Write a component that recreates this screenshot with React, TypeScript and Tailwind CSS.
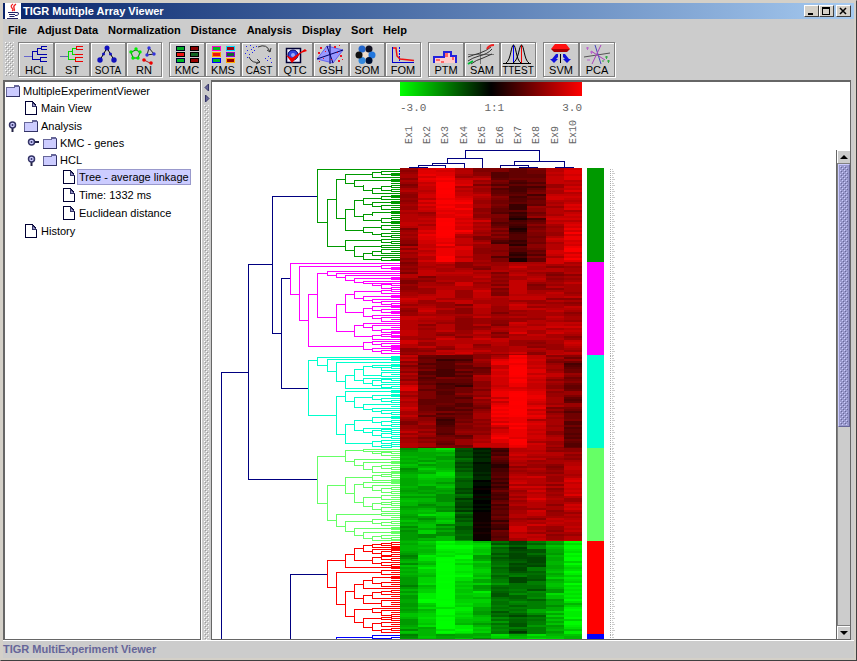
import type { ReactNode } from 'react';
import clsx from 'clsx';

type Bracket = [level: number, y1: number, y2: number, child1: number, child2: number];

interface TreeNode {
  label: string;
  depth: number;
  kind: 'folder' | 'leaf';
  handle?: 'open' | 'closed';
  selected?: boolean;
}

interface Tool {
  label: string;
  small?: boolean;
  icon: ReactNode;
}

const MENUS = ['File', 'Adjust Data', 'Normalization', 'Distance', 'Analysis', 'Display', 'Sort', 'Help'];

const TREE: TreeNode[] = [
  { label: 'MultipleExperimentViewer', depth: 0, kind: 'folder' },
  { label: 'Main View', depth: 1, kind: 'leaf' },
  { label: 'Analysis', depth: 1, kind: 'folder', handle: 'open' },
  { label: 'KMC - genes', depth: 2, kind: 'folder', handle: 'closed' },
  { label: 'HCL', depth: 2, kind: 'folder', handle: 'open' },
  { label: 'Tree - average linkage', depth: 3, kind: 'leaf', selected: true },
  { label: 'Time: 1332 ms', depth: 3, kind: 'leaf' },
  { label: 'Euclidean distance', depth: 3, kind: 'leaf' },
  { label: 'History', depth: 1, kind: 'leaf' },
];

const INDENT = ['pl-0', 'pl-0', 'pl-[19px]', 'pl-[38px]'];

// x position of every merge level in the gene tree, the last one is the leaf edge
const LEVELS = [9, 36, 60, 69, 78, 87, 96, 105, 115, 124, 133, 142, 151, 160, 169, 179, 188];

const ROWS = 47;
const CLUSTER_H = 93;
const FIRST_H = 94;
const VIEW_H = 560;

const NAVY: Bracket[] = [
  [0, 204, 560, 1, 0],
  [1, 96, 311, 2, 7],
  [2, 28, 165, 7, 3],
  [3, 110, 220, 4, 6],
  [4, 406, 560, 8, 4],
];

const GREEN: Bracket[] = [
  [7, 1, 54, 16, 8], [8, 31, 78, 9, 10], [9, 11, 50, 10, 10], [10, 6, 15, 13, 11],
  [13, 4, 9, 14, 16], [14, 3, 6, 15, 16], [11, 12, 18, 16, 12], [12, 16, 22, 12, 13],
  [13, 20, 25, 14, 16], [14, 18, 22, 15, 15], [10, 41, 62, 11, 12], [11, 32, 48, 12, 12],
  [12, 30, 36, 14, 13], [14, 28, 31, 16, 16], [13, 34, 38, 16, 14], [14, 37, 41, 15, 15],
  [12, 46, 52, 13, 14], [13, 44, 47, 16, 13], [14, 50, 54, 15, 16], [12, 59, 64, 14, 13],
  [14, 57, 61, 15, 15], [13, 64, 66, 13, 14], [14, 65, 68, 15, 15], [10, 72, 82, 14, 11],
  [14, 71, 74, 15, 15], [11, 78, 88, 14, 12], [14, 77, 79, 16, 16], [12, 85, 91, 13, 14],
  [13, 83, 87, 14, 16], [14, 81, 85, 15, 15], [14, 89, 92, 15, 16],
];

const MAGENTA: Bracket[] = [
  [4, 95, 126, 16, 5], [5, 98, 152, 14, 6], [14, 97, 100, 15, 16], [6, 126, 178, 7, 12],
  [7, 105, 149, 8, 9], [8, 103, 107, 16, 9], [9, 105, 109, 16, 10], [10, 107, 112, 16, 11],
  [11, 110, 114, 16, 12], [12, 113, 115, 16, 13], [13, 115, 117, 16, 14], [14, 116, 120, 15, 15],
  [9, 136, 163, 10, 11], [10, 126, 144, 11, 12], [11, 123, 130, 14, 12], [14, 122, 125, 15, 15],
  [12, 128, 132, 16, 13], [13, 131, 134, 16, 14], [14, 133, 136, 15, 15], [12, 140, 148, 13, 13],
  [13, 138, 142, 16, 14], [14, 141, 144, 15, 16], [13, 147, 150, 16, 14], [14, 149, 153, 15, 15],
  [11, 157, 168, 12, 13], [12, 155, 159, 16, 13], [13, 157, 162, 16, 14], [14, 161, 164, 15, 16],
  [13, 167, 171, 14, 16], [14, 166, 168, 15, 16], [12, 174, 181, 13, 13], [13, 173, 176, 16, 14],
  [14, 175, 178, 15, 16], [13, 180, 183, 16, 14], [14, 182, 185, 15, 15],
];

const CYAN: Bracket[] = [
  [6, 192, 247, 7, 9], [7, 189, 197, 16, 8], [8, 191, 203, 16, 9], [9, 194, 213, 16, 10],
  [10, 207, 220, 11, 16], [11, 201, 212, 12, 12], [12, 198, 207, 13, 14], [13, 197, 199, 16, 14],
  [14, 199, 202, 15, 15], [14, 204, 208, 15, 15], [12, 210, 215, 16, 13], [13, 212, 217, 14, 14],
  [14, 211, 214, 15, 15], [14, 216, 219, 15, 15], [9, 228, 266, 10, 10], [10, 223, 233, 16, 11],
  [11, 229, 239, 13, 12], [13, 227, 231, 16, 14], [14, 230, 233, 15, 15], [12, 236, 241, 16, 13],
  [13, 240, 243, 16, 14], [14, 242, 245, 15, 15], [10, 256, 275, 11, 13], [11, 252, 262, 13, 12],
  [13, 249, 254, 16, 14], [14, 253, 257, 15, 15], [12, 260, 264, 16, 13], [13, 262, 267, 14, 14],
  [14, 261, 263, 15, 15], [14, 265, 269, 15, 15], [13, 273, 278, 14, 14], [14, 272, 275, 15, 15],
  [14, 277, 279, 15, 15],
];

const LIME: Bracket[] = [
  [7, 288, 335, 10, 8], [10, 282, 293, 12, 11], [12, 281, 283, 16, 13], [13, 283, 285, 16, 14],
  [14, 284, 287, 15, 15], [11, 291, 297, 16, 12], [12, 294, 301, 16, 13], [13, 298, 304, 14, 16],
  [14, 297, 300, 15, 15], [8, 317, 352, 10, 9], [10, 309, 325, 13, 11], [13, 307, 312, 14, 16],
  [14, 306, 308, 15, 15], [11, 316, 334, 12, 12], [12, 314, 319, 16, 13], [13, 317, 322, 16, 14],
  [14, 320, 324, 15, 15], [12, 329, 338, 14, 13], [14, 327, 331, 15, 15], [13, 335, 341, 14, 14],
  [14, 334, 336, 15, 15], [14, 339, 343, 15, 15], [9, 346, 358, 14, 10], [14, 345, 347, 15, 15],
  [10, 353, 363, 13, 11], [13, 351, 355, 16, 14], [14, 354, 357, 15, 15], [11, 360, 367, 16, 12],
  [12, 364, 370, 16, 13], [13, 368, 372, 14, 16], [14, 367, 370, 15, 15],
];

const RED: Bracket[] = [
  [8, 392, 419, 10, 9], [10, 386, 399, 11, 16], [11, 380, 392, 12, 13], [12, 377, 383, 13, 13],
  [13, 376, 379, 14, 16], [14, 375, 377, 15, 15], [13, 381, 385, 16, 14], [14, 383, 387, 15, 15],
  [13, 389, 395, 14, 14], [14, 388, 391, 15, 15], [14, 394, 397, 15, 15], [9, 404, 436, 14, 10],
  [14, 402, 406, 15, 15], [10, 423, 448, 11, 11], [11, 416, 430, 12, 12], [12, 412, 420, 13, 16],
  [13, 409, 415, 16, 14], [14, 414, 418, 15, 15], [12, 427, 435, 13, 14], [13, 424, 430, 14, 16],
  [14, 423, 426, 15, 15], [14, 432, 438, 15, 15], [11, 441, 454, 13, 12], [13, 440, 444, 16, 14],
  [14, 442, 447, 15, 15], [12, 450, 459, 14, 13], [14, 449, 451, 15, 15], [13, 455, 462, 14, 14],
  [14, 454, 458, 15, 15], [14, 461, 464, 15, 15],
];

const BLUE: Bracket[] = [
  [9, 469, 520, 13, 9], [13, 467, 470, 16, 14], [14, 470, 474, 15, 15],
];

// expression levels per sample, from -255 (green) to 255 (red), in bands from top to bottom
const CLUSTERS = [
  {
    name: 'green', color: '#009900', brackets: GREEN,
    bands: [
      [150, 200, 245, 190, 150, 105, 75, 105, 185, 190],
      [160, 200, 255, 225, 170, 120, 55, 115, 175, 210],
      [155, 210, 250, 205, 150, 105, 60, 115, 180, 225],
    ],
  },
  {
    name: 'magenta', color: '#ff00ff', brackets: MAGENTA,
    bands: [
      [160, 165, 175, 170, 170, 145, 175, 165, 170, 165],
      [170, 170, 165, 160, 175, 160, 175, 160, 170, 165],
      [170, 175, 180, 175, 165, 155, 180, 160, 165, 180],
    ],
  },
  {
    name: 'cyan', color: '#00ffcc', brackets: CYAN,
    bands: [
      [170, 115, 75, 85, 145, 205, 255, 205, 160, 110],
      [185, 125, 85, 110, 155, 235, 255, 225, 155, 120],
      [155, 150, 90, 125, 165, 220, 245, 205, 160, 110],
    ],
  },
  {
    name: 'lime', color: '#66ff66', brackets: LIME,
    bands: [
      [-165, -175, -190, -80, -30, 75, 180, 180, 155, 175],
      [-170, -175, -165, -75, -5, 95, 180, 185, 165, 195],
      [-170, -175, -170, -95, 15, 85, 185, 175, 185, 180],
    ],
  },
  {
    name: 'red', color: '#ff0000', brackets: RED,
    bands: [
      [-160, -200, -250, -230, -185, -110, -70, -105, -190, -230],
      [-165, -225, -255, -215, -195, -120, -100, -120, -190, -220],
      [-175, -210, -255, -215, -175, -115, -90, -130, -180, -240],
    ],
  },
  {
    name: 'blue', color: '#0000ff', brackets: BLUE,
    bands: [
      [-150, -190, -160, -195, -150, -200, -200, -195, -190, -180],
      [-150, -190, -160, -195, -150, -200, -200, -195, -190, -180],
      [-150, -190, -160, -195, -150, -200, -200, -195, -190, -180],
    ],
  },
];

const clusterTop = (c: number) => (c === 0 ? 0 : FIRST_H + (c - 1) * CLUSTER_H);
const clusterHeight = (c: number) => (c === 0 ? FIRST_H : CLUSTER_H);
const rowTop = (c: number, r: number) => clusterTop(c) + Math.min(r * 2, clusterHeight(c));

const noise = (a: number, b: number, c: number) => {
  const v = Math.sin(a * 127.1 + b * 311.7 + c * 74.7) * 43758.5453;
  return v - Math.floor(v);
};

function cellColor(c: number, r: number, col: number) {
  const base = CLUSTERS[c].bands[Math.min(2, Math.floor((r * 3) / ROWS))][col];
  const run = noise(c + 1, Math.floor((r + col * 2) / 3), col + 1) - 0.5;
  const own = noise(c + 7, r, col + 3) - 0.5;
  const spread = Math.abs(base) < 40 ? 20 : 46;
  const value = Math.round((base + (run + own) * spread) / 14) * 14;
  const level = Math.min(255, Math.abs(value));
  return value < 0 ? `rgb(0,${level},0)` : `rgb(${level},0,0)`;
}

function bracketPath([level, y1, y2, c1, c2]: Bracket) {
  const x = LEVELS[level] + 0.5;
  return `M${LEVELS[c1] + 0.5} ${y1 + 0.5}H${x}V${y2 + 0.5}H${LEVELS[c2] + 0.5}`;
}

function Bumps({ id, light, dark, className }: { id: string; light: string; dark: string; className?: string }) {
  return (
    <svg className={className} shapeRendering="crispEdges" aria-hidden="true">
      <defs>
        <pattern id={id} width="4" height="4" patternUnits="userSpaceOnUse">
          <rect width="1" height="1" fill={light} />
          <rect x="1" y="1" width="1" height="1" fill={dark} />
          <rect x="2" y="2" width="1" height="1" fill={light} />
          <rect x="3" y="3" width="1" height="1" fill={dark} />
        </pattern>
      </defs>
      <rect width="100%" height="100%" fill={`url(#${id})`} />
    </svg>
  );
}

function Swatches({ cells }: { cells: [string, string][] }) {
  return (
    <g shapeRendering="crispEdges">
      {cells.map(([fill, stroke], i) => (
        <g key={i}>
          <rect x={i % 2 ? 20 : 6} y={3 + Math.floor(i / 2) * 6} width="9" height="5" fill={stroke} />
          <rect x={i % 2 ? 21 : 7} y={4 + Math.floor(i / 2) * 6} width="7" height="3" fill={fill} />
        </g>
      ))}
    </g>
  );
}

const TOOL_GROUPS: Tool[][] = [
  [
    {
      label: 'HCL',
      icon: (
        <g fill="none" stroke="#0000aa" shapeRendering="crispEdges">
          <path d="M5 13.5H13" stroke="#6666cc" />
          <path d="M18 8.5H13.5V16.5H21M22 5.5H18.5V11.5H28M28 3.5H22.5V6.5H28M28 14.5H21.5V18.5H28" />
        </g>
      ),
    },
    {
      label: 'ST',
      icon: (
        <g fill="none" shapeRendering="crispEdges">
          <path d="M5 13.5H13" stroke="#6666aa" />
          <path d="M18 8.5H13.5V16.5H21M22 5.5H17.5V11.5H21" stroke="#00dd00" />
          <path d="M28 3.5H21.5V6.5H28M20 11.5H28M28 14.5H20.5V18.5H28" stroke="#ee0000" />
        </g>
      ),
    },
    {
      label: 'SOTA',
      small: true,
      icon: (
        <g>
          <path d="M16 5L9 17M16 5L23 17" stroke="#000" fill="none" />
          <g fill="#1111bb">
            <circle cx="16" cy="5" r="2.5" />
            <circle cx="12.5" cy="11" r="1.5" />
            <circle cx="19.5" cy="11" r="1.5" />
            <circle cx="9" cy="17" r="2.7" />
            <circle cx="23" cy="17" r="2.7" />
          </g>
        </g>
      ),
    },
    {
      label: 'RN',
      icon: (
        <g>
          <path d="M4 9L9 7L13 9L11 15L6 15Z" fill="none" stroke="#006600" />
          <g fill="#00ee00">
            <circle cx="4" cy="9" r="1.7" />
            <circle cx="9" cy="6" r="1.7" />
            <circle cx="13" cy="9" r="1.7" />
            <circle cx="11" cy="15" r="1.7" />
            <circle cx="6" cy="15" r="1.7" />
          </g>
          <path d="M22 5L20 12L27 11Z" fill="none" stroke="#222" />
          <g fill="#3333dd">
            <circle cx="22" cy="5" r="1.7" />
            <circle cx="20" cy="12" r="1.7" />
            <circle cx="27" cy="11" r="1.7" />
          </g>
          <path d="M17 17L25 21" stroke="#aa2222" />
          <circle cx="17" cy="17" r="1.8" fill="#ee0000" />
          <circle cx="24" cy="20" r="1.8" fill="#ee0000" />
        </g>
      ),
    },
  ],
  [
    {
      label: 'KMC',
      icon: (
        <Swatches
          cells={[
            ['#00aa22', '#000022'], ['#880000', '#000000'], ['#ee1111', '#000000'],
            ['#116622', '#000000'], ['#00bb22', '#000044'], ['#990000', '#000000'],
          ]}
        />
      ),
    },
    {
      label: 'KMS',
      icon: (
        <Swatches
          cells={[
            ['#00bb22', '#ff00cc'], ['#990011', '#00ddff'], ['#ee1111', '#ff9900'],
            ['#116633', '#9900cc'], ['#00bb22', '#0000ff'], ['#990000', '#ffaa00'],
          ]}
        />
      ),
    },
    {
      label: 'CAST',
      small: true,
      icon: (
        <g>
          <path
            d="M4 3h1v1h-1zM8 2h1v1h-1zM11 4h1v1h-1zM5 7h1v1h-1zM9 6h1v1h-1zM3 10h1v1h-1zM7 11h1v1h-1zM10 9h1v1h-1zM14 3h1v1h-1zM5 14h1v1h-1zM12 7h1v1h-1zM26 13h1v1h-1zM28 15h1v1h-1zM25 17h1v1h-1zM29 19h1v1h-1zM23 15h1v1h-1z"
            fill="#2222ee"
          />
          <path d="M16 4Q25 0 28 9M28 9l-3-2M28 9l1-4M7 14Q10 21 18 19M18 19l-3-3M18 19l-4 2" fill="none" stroke="#333" />
        </g>
      ),
    },
    {
      label: 'QTC',
      icon: (
        <g>
          <rect x="8.5" y="5.5" width="14" height="14" fill="#eeeeff" stroke="#000033" strokeWidth="1.5" />
          <circle cx="15" cy="12" r="5" fill="#3344dd" stroke="#000066" />
          <circle cx="15" cy="12" r="2" fill="#99aaff" />
          <path d="M8 12L14 15L27 6L29 8L23 10L14 20Z" fill="#ee0000" />
        </g>
      ),
    },
    {
      label: 'GSH',
      icon: (
        <g>
          <path d="M3 16L13 3L29 7L19 20Z" fill="#9999ff" stroke="#6666ee" />
          <path d="M3 16L29 7M16 1V21M13 3L19 20" fill="none" stroke="#000066" />
          <path
            d="M6 4h2v2h-2zM11 8h1v1h-1zM20 3h2v2h-2zM25 2h1v1h-1zM23 9h1v1h-1zM4 9h2v2h-2zM9 15h1v1h-1zM17 16h1v1h-1zM26 12h2v2h-2zM24 17h2v2h-2zM28 16h1v1h-1zM5 18h1v1h-1z"
            fill="#ee1122"
          />
        </g>
      ),
    },
    {
      label: 'SOM',
      icon: (
        <g>
          <circle cx="15.5" cy="12" r="3" fill="#eeddcc" />
          <circle cx="12" cy="6" r="3.5" fill="#2266cc" />
          <circle cx="19" cy="6" r="3.5" fill="#111122" />
          <circle cx="22" cy="12" r="3.5" fill="#2277dd" />
          <circle cx="19" cy="17.5" r="3.5" fill="#001133" />
          <circle cx="12" cy="17.5" r="3.5" fill="#3388dd" />
          <circle cx="9" cy="12" r="3.5" fill="#111111" />
        </g>
      ),
    },
    {
      label: 'FOM',
      icon: (
        <g fill="none">
          <path d="M6.5 4V19.5H28" stroke="#0000cc" shapeRendering="crispEdges" />
          <path d="M13.5 4V19" stroke="#0000ff" strokeDasharray="2 1" />
          <path d="M7 5H10L11 13L14 16L28 17.5" stroke="#ee1111" strokeWidth="1.5" />
        </g>
      ),
    },
  ],
  [
    {
      label: 'PTM',
      icon: (
        <g shapeRendering="crispEdges">
          <path d="M5 20V14H15V8H22V12H28V20Z" fill="#ffcccc" />
          <path d="M7 16h4v2h-4zM16 10h3v4h-3zM23 14h2v3h-2zM12 18h3v2h-3z" fill="#ff6666" />
          <path d="M5 20V14H15V9H22V13H27V20" fill="none" stroke="#2222dd" strokeWidth="2" />
        </g>
      ),
    },
    {
      label: 'SAM',
      icon: (
        <g fill="none">
          <path d="M15.5 1V21M3 11.5H29" stroke="#777" shapeRendering="crispEdges" />
          <path d="M3 18Q7 15 14 13Q23 11 27 6M3 14Q8 12 15 10Q21 8 26 4M6 21Q11 17 18 15L27 11" stroke="#333" />
          <path d="M22 6Q24 2 29 2" stroke="#ee2222" strokeWidth="2" />
          <path d="M3 21L8 18" stroke="#00bb33" strokeWidth="2" />
        </g>
      ),
    },
    {
      label: 'TTEST',
      small: true,
      icon: (
        <g fill="none">
          <path d="M12.5 2V20" stroke="#0000ff" shapeRendering="crispEdges" />
          <path d="M20.5 2V20" stroke="#ee0000" shapeRendering="crispEdges" />
          <path d="M5 20C10 17 10 2 12.5 2S15 17 20 20M12 20C18 17 18 2 20.5 2S23 17 28 20" stroke="#000" />
          <path d="M2 20.5H30" stroke="#000" shapeRendering="crispEdges" />
        </g>
      ),
    },
  ],
  [
    {
      label: 'SVM',
      icon: (
        <g>
          <path d="M11 1H22L26 6H7Z" fill="#ff1111" />
          <path d="M7 6H26L23 9H10Z" fill="#aa0000" />
          <path d="M16.5 11V20" stroke="#000" shapeRendering="crispEdges" />
          <path d="M12 11H14V14L12 16H14L10 20L6 16H8Z" fill="#1111dd" />
          <path d="M21 11H19V14L21 16H19L23 20L27 16H25Z" fill="#1111dd" />
        </g>
      ),
    },
    {
      label: 'PCA',
      icon: (
        <g fill="none">
          <path d="M4 14L30 10" stroke="#555" />
          <path d="M15 2L21 21" stroke="#4444bb" />
          <path d="M21 2L12 21M11 8L25 17" stroke="#aa44bb" />
          <path d="M6 5h3M7.5 4v3M10 9h3M11.5 8v3M7 17h3" stroke="#bb66cc" />
          <path d="M25 14h3M26.5 13v3M27 18h3M28.5 17v3M22 18h2" stroke="#33aa44" />
        </g>
      ),
    },
  ],
];

function ToolButton({ tool }: { tool: Tool }) {
  return (
    <button className="flex h-[35px] w-9 flex-col items-center border border-[#808080] shadow-[inset_1px_1px_0_#fff,1px_1px_0_#fff]">
      <svg width="34" height="22" viewBox="0 0 34 22" className="shrink-0" aria-hidden="true">
        {tool.icon}
      </svg>
      <span className={clsx('leading-[11px] text-black', tool.small ? 'text-[10px]' : 'text-[11px]')}>
        {tool.label}
      </span>
    </button>
  );
}

function JavaCup() {
  return (
    <svg width="16" height="16" viewBox="0 0 16 16" className="shrink-0" aria-hidden="true">
      <rect width="16" height="16" fill="#fff" />
      <path d="M8 1Q5 3 7 5T7 8M11 1Q8 3 9 5T9 8" fill="none" stroke="#ee2222" strokeWidth="1.3" />
      <path d="M3 9.5H11M4 11.5H10M4.5 13.5H9.5M2 15.5H13" fill="none" stroke="#222266" />
      <path d="M11 9.5Q14 9 13.5 11T10 12.5" fill="none" stroke="#222266" />
    </svg>
  );
}

function WindowButton({ label, children }: { label: string; children: ReactNode }) {
  return (
    <button
      aria-label={label}
      className="h-3 w-[15px] border border-t-white border-r-[#404040] border-b-[#404040] border-l-white bg-[#d4d0c8]"
    >
      <svg width="12" height="10" viewBox="0 0 12 10" shapeRendering="crispEdges" stroke="#000" fill="none">
        {children}
      </svg>
    </button>
  );
}

function FolderIcon() {
  return (
    <svg width="16" height="14" viewBox="0 0 16 14" className="shrink-0" shapeRendering="crispEdges" aria-hidden="true">
      <path d="M1.5 3.5H9.5V2.5H14.5V12.5H1.5Z" fill="#ccccff" stroke="#666699" />
      <path d="M9 1H14V3H9Z" fill="#666699" />
      <path d="M1 12.5H15M14.5 3V13" stroke="#333366" />
    </svg>
  );
}

function LeafIcon() {
  return (
    <svg width="16" height="16" viewBox="0 0 16 16" className="shrink-0" shapeRendering="crispEdges" aria-hidden="true">
      <path d="M2.5 1.5H9.5L13.5 6.5V14.5H2.5Z" fill="#fff" stroke="#000033" />
      <path d="M9 2V6H13Z" fill="#9999cc" stroke="#333366" />
    </svg>
  );
}

function Handle({ state }: { state: 'open' | 'closed' }) {
  return (
    <svg width="18" height="14" viewBox="0 0 18 14" aria-hidden="true">
      <path d={state === 'open' ? 'M7.5 7V13' : 'M8 6H15'} stroke="#222244" strokeWidth="2" />
      <circle cx="7.5" cy="6" r="3" fill="#ccccff" stroke="#333366" strokeWidth="1.5" />
      <circle cx="7.5" cy="6" r="1" fill="#333366" />
    </svg>
  );
}

function NavigationTree() {
  return (
    <ul className="w-[198px] shrink-0 overflow-hidden border border-t-2 border-l-2 border-[#666] bg-white">
      {TREE.map((node) => (
        <li
          key={node.label}
          className={clsx('flex items-center', node.kind === 'leaf' ? 'h-[18px]' : 'h-[17px]', INDENT[node.depth])}
        >
          {node.depth > 0 && <span className="w-[18px] shrink-0">{node.handle && <Handle state={node.handle} />}</span>}
          {node.kind === 'folder' ? <FolderIcon /> : <LeafIcon />}
          <span
            className={clsx(
              'px-[2px] leading-4 whitespace-nowrap text-black outline-1 -outline-offset-1',
              node.selected ? 'bg-[#ccccff] outline-[#9999cc]' : 'outline-transparent'
            )}
          >
            {node.label}
          </span>
        </li>
      ))}
    </ul>
  );
}

function SampleTree() {
  return (
    <svg width="182" height="18" viewBox="0 0 182 18" fill="none" stroke="#000080" shapeRendering="crispEdges" aria-hidden="true">
      <path d="M65.5 8V0.5H139.5V11M47.5 13V8.5H82.5V18M32.5 15V13.5H64.5V18M18.5 17V15.5H45.5V18M9 17.5H28" />
      <path d="M114.5 15V11.5H164.5V17M100.5 18V15.5H128.5V17M119 17.5H138M155 17.5H174" />
    </svg>
  );
}

function GeneTree() {
  return (
    <svg width="188" height={VIEW_H} fill="none" shapeRendering="crispEdges" className="shrink-0" aria-hidden="true">
      <path d={NAVY.map(bracketPath).join('')} stroke="#000080" />
      {CLUSTERS.map((cluster, c) => (
        <g key={cluster.name} stroke={cluster.color}>
          <path d={cluster.brackets.map(bracketPath).join('')} />
          <path d={Array.from({ length: ROWS - 1 }, (_, r) => `M179 ${rowTop(c, r) + 1.5}H188`).join('')} />
        </g>
      ))}
    </svg>
  );
}

function HeatMap() {
  return (
    <svg width="182" height={VIEW_H} shapeRendering="crispEdges" className="shrink-0" aria-hidden="true">
      {CLUSTERS.map((cluster, c) =>
        Array.from({ length: ROWS }, (_, r) =>
          Array.from({ length: 10 }, (_, col) => {
            const x = Math.round(col * 18.2);
            return (
              <rect
                key={`${cluster.name}-${r}-${col}`}
                x={x}
                y={rowTop(c, r)}
                width={Math.round((col + 1) * 18.2) - x}
                height={rowTop(c, r + 1) - rowTop(c, r)}
                fill={cellColor(c, r, col)}
              />
            );
          })
        )
      )}
    </svg>
  );
}

function ClusterBar() {
  return (
    <svg width="17" height={VIEW_H} shapeRendering="crispEdges" className="ml-[5px] shrink-0" aria-hidden="true">
      {CLUSTERS.map((cluster, c) => (
        <rect key={cluster.name} y={clusterTop(c)} width="17" height={clusterHeight(c)} fill={cluster.color} />
      ))}
    </svg>
  );
}

function GeneMarks() {
  return (
    <svg width="5" height={VIEW_H} shapeRendering="crispEdges" className="ml-[6px] shrink-0" aria-hidden="true">
      {CLUSTERS.map((cluster, c) =>
        Array.from({ length: ROWS }, (_, r) => (
          <g key={`${cluster.name}-${r}`}>
            <rect y={rowTop(c, r) + 1} width="1" height="1" fill="#aaaaaa" />
            <rect x="2" y={rowTop(c, r) + 1} width={1 + (r % 3)} height="1" fill="#cccccc" />
          </g>
        ))
      )}
    </svg>
  );
}

function ScrollBar() {
  return (
    <div className="flex w-[14px] shrink-0 flex-col border-l border-[#666] bg-[#ccc]">
      <button aria-label="Scroll up" className="flex h-[13px] items-center justify-center border-t border-l border-white">
        <svg width="8" height="4" viewBox="0 0 8 4" aria-hidden="true">
          <path d="M4 0L8 4H0Z" />
        </svg>
      </button>
      <div className="min-h-0 flex-1 border-y border-l border-[#808080]">
        <div className="flex h-[57%] border border-t-[#ccccff] border-r-[#666699] border-b-[#666699] border-l-[#ccccff] bg-[#9999cc] p-px">
          <Bumps id="thumb-bumps" light="#ccccff" dark="#666699" className="h-full w-full" />
        </div>
      </div>
      <button aria-label="Scroll down" className="flex h-[13px] items-center justify-center border-t border-l border-white">
        <svg width="8" height="4" viewBox="0 0 8 4" aria-hidden="true">
          <path d="M0 0H8L4 4Z" />
        </svg>
      </button>
    </div>
  );
}

function ExpressionView() {
  return (
    <main className="flex min-w-0 flex-1 flex-col overflow-hidden border border-t-2 border-[#666] bg-white">
      {/* Colour scale and sample names */}
      <div className="h-[68px] shrink-0 pl-[188px] font-['Liberation_Mono',monospace] text-[#666]">
        <div className="w-[182px]">
          <div className="h-[14px] bg-[linear-gradient(to_right,#00ff00,#000_50%,#ff0000)]" />
          <div className="mt-1 flex h-4 items-center justify-between text-[11px]">
            <span>-3.0</span>
            <span>1:1</span>
            <span>3.0</span>
          </div>
          <div className="grid h-7 grid-cols-10 text-[10px] leading-5">
            {Array.from({ length: 10 }, (_, i) => (
              <span key={i} className="rotate-180 [writing-mode:vertical-rl]">
                Ex{i + 1}
              </span>
            ))}
          </div>
        </div>
      </div>

      <div className="flex min-h-0 flex-1">
        <div className="min-w-0 flex-1 overflow-hidden">
          <div className="h-[18px] pl-[188px]">
            <SampleTree />
          </div>
          <div className="flex">
            <GeneTree />
            <HeatMap />
            <ClusterBar />
            <GeneMarks />
          </div>
        </div>
        <ScrollBar />
      </div>
    </main>
  );
}

export default function App() {
  return (
    <div className="flex h-screen flex-col overflow-hidden border border-t-[#d4d0c8] border-r-[#404040] border-b-[#404040] border-l-[#d4d0c8] bg-[#d4d0c8] p-[2px] font-['Liberation_Sans',Arial,sans-serif] text-[11px]">
      <header className="flex h-4 shrink-0 items-center gap-[2px] bg-linear-to-r from-[#0a246a] to-[#a6caf0] pr-[3px] pl-[2px]">
        <JavaCup />
        <h1 className="flex-1 leading-4 font-bold text-white">TIGR Multiple Array Viewer</h1>
        <div className="flex">
          <WindowButton label="Minimize">
            <path d="M3 7.5H8" strokeWidth="2" />
          </WindowButton>
          <WindowButton label="Maximize">
            <path d="M2.5 1.5H9.5V8.5H2.5ZM2 2.5H10" />
          </WindowButton>
        </div>
        <WindowButton label="Close">
          <path d="M3 2L9 8M9 2L3 8" strokeWidth="1.5" shapeRendering="auto" />
        </WindowButton>
      </header>

      <div className="flex min-h-0 flex-1 flex-col bg-[#ccc]">
        <nav className="flex h-[23px] shrink-0 items-center gap-[10px] pl-[5px]">
          {MENUS.map((menu) => (
            <button key={menu} className="font-bold text-black">
              {menu}
            </button>
          ))}
        </nav>

        <div className="flex h-[38px] shrink-0 items-start pl-[2px]">
          <Bumps id="toolbar-bumps" light="#ffffff" dark="#999999" className="mr-1 h-[34px] w-[9px]" />
          <div className="flex gap-[7px]">
            {TOOL_GROUPS.map((group, i) => (
              <div key={i} className="flex">
                {group.map((tool) => (
                  <ToolButton key={tool.label} tool={tool} />
                ))}
              </div>
            ))}
          </div>
        </div>

        <div className="flex min-h-0 flex-1 border-b border-white pr-[3px]">
          <NavigationTree />
          <div className="flex w-[10px] shrink-0 flex-col items-center gap-[2px] border-l border-white pt-[3px]">
            <svg width="6" height="20" viewBox="0 0 6 20" className="shrink-0" fill="#666699" stroke="#333366" aria-hidden="true">
              <path d="M4.5 1V8L1 4.5Z" />
              <path d="M1.5 12V19L5 15.5Z" />
            </svg>
            <Bumps id="divider-bumps" light="#ffffff" dark="#999999" className="w-[5px] flex-1" />
          </div>
          <ExpressionView />
        </div>

        <footer className="h-[17px] shrink-0 leading-[17px] font-bold text-[#666699]">TIGR MultiExperiment Viewer</footer>
      </div>
    </div>
  );
}
